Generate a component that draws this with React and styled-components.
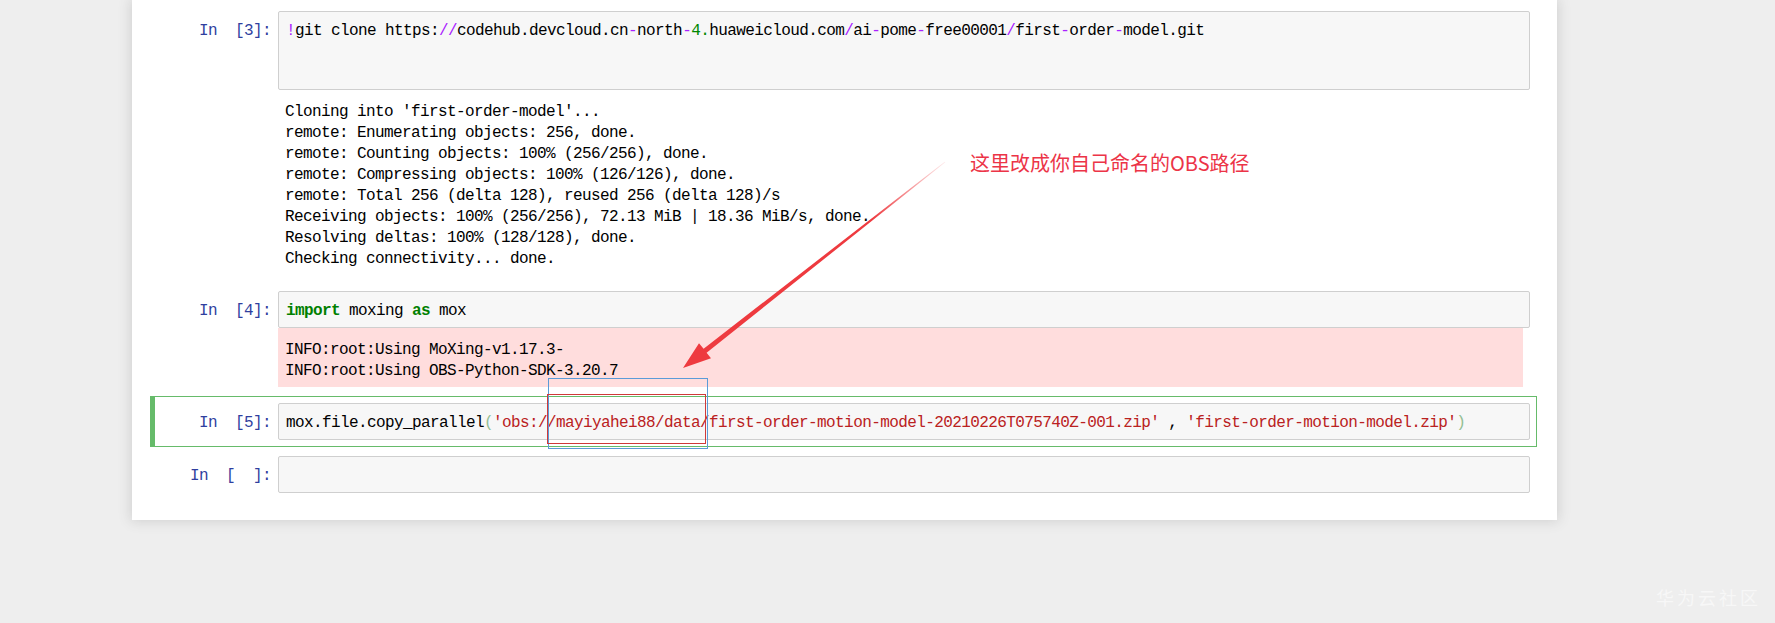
import React from "react";
import styled, { createGlobalStyle } from "styled-components";

const GlobalStyle = createGlobalStyle`
  html, body {
    margin: 0;
    padding: 0;
    background: #eeeeee;
  }
  #root {
    height: 623px;
    overflow: hidden;
  }
`;

function App() {
  return (
    <Page>
      <GlobalStyle />
      <Notebook>
        <Cell>
          <Prompt>In  [3]:</Prompt>
          <Input $lines={3}>
            <Op>!</Op>git clone https:<Op>//</Op>codehub.devcloud.cn<Op>-</Op>north
            <Op>-</Op>
            <Num>4.</Num>huaweicloud.com<Op>/</Op>ai<Op>-</Op>pome<Op>-</Op>free00001
            <Op>/</Op>first<Op>-</Op>order<Op>-</Op>model.git
          </Input>
          <Output>
            {`Cloning into 'first-order-model'...
remote: Enumerating objects: 256, done.
remote: Counting objects: 100% (256/256), done.
remote: Compressing objects: 100% (126/126), done.
remote: Total 256 (delta 128), reused 256 (delta 128)/s
Receiving objects: 100% (256/256), 72.13 MiB | 18.36 MiB/s, done.
Resolving deltas: 100% (128/128), done.
Checking connectivity... done.`}
          </Output>
        </Cell>

        <Cell>
          <Prompt>In  [4]:</Prompt>
          <Input $lines={1}>
            <Kw>import</Kw> moxing <Kw>as</Kw> mox
          </Input>
          <Output $err>
            {`INFO:root:Using MoXing-v1.17.3-
INFO:root:Using OBS-Python-SDK-3.20.7`}
          </Output>
        </Cell>

        <Cell $selected>
          <Prompt>In  [5]:</Prompt>
          <Input $lines={1}>
            mox.file.copy_parallel<Bracket>(</Bracket>
            <Str>'obs://mayiyahei88/data/first-order-motion-model-20210226T075740Z-001.zip'</Str>
            {" , "}
            <Str>'first-order-motion-model.zip'</Str>
            <Bracket>)</Bracket>
          </Input>
        </Cell>

        <Cell>
          <Prompt>In  [  ]:</Prompt>
          <Input $lines={1} />
        </Cell>
      </Notebook>

      <Note>这里改成你自己命名的OBS路径</Note>
      <Frame $color="#5b9bd8" $x={548} $y={378} $w={160} $h={71} />
      <Frame $color="#cf3a3a" $x={547} $y={394} $w={159} $h={50} />

      <ArrowLayer width="1775" height="623" viewBox="0 0 1775 623">
        <defs>
          <linearGradient
            id="shaft"
            gradientUnits="userSpaceOnUse"
            x1="945"
            y1="162"
            x2="683"
            y2="368"
          >
            <stop offset="0" stopColor="#ee3a3f" stopOpacity="0.1" />
            <stop offset="0.28" stopColor="#ee3a3f" stopOpacity="1" />
            <stop offset="1" stopColor="#ee3a3f" stopOpacity="1" />
          </linearGradient>
        </defs>
        <polygon
          fill="url(#shaft)"
          points="945.3,162.3 706.6,352.8 711,358.3 683,368 699,343.2 703.6,348.7 944.7,161.7"
        />
      </ArrowLayer>

      <Watermark>华为云社区</Watermark>
    </Page>
  );
}

export default App;

const Page = styled.div`
  position: relative;
  width: 1775px;
  height: 623px;
  overflow: hidden;
  background: #eeeeee;
  font-family: "Liberation Mono", "DejaVu Sans Mono", monospace;
  font-size: 16px;
  letter-spacing: -0.6px;
  color: #000;
`;

const Notebook = styled.div`
  margin-left: 132px;
  width: 1425px;
  box-sizing: border-box;
  padding: 4px 20px 20px 18px;
  background: #ffffff;
  box-shadow: 0 0 12px 1px rgba(87, 87, 87, 0.2);
  display: flex;
  flex-direction: column;
  gap: 2px;
`;

const Cell = styled.div`
  position: relative;
  display: grid;
  grid-template-columns: 121px 1fr;
  padding: 6px;
  border: 1px solid ${(p) => (p.$selected ? "#66bb6a" : "transparent")};

  &::before {
    content: "";
    display: ${(p) => (p.$selected ? "block" : "none")};
    position: absolute;
    left: -1px;
    top: -1px;
    bottom: -1px;
    width: 5px;
    background: #66bb6a;
  }
`;

const Prompt = styled.div`
  padding: 10px 7px 0 0;
  text-align: right;
  white-space: pre;
  line-height: 21px;
  color: #303f9f;
`;

const Input = styled.div`
  box-sizing: content-box;
  min-height: ${(p) => p.$lines * 21}px;
  padding: 9px 7px 5px;
  background: #f7f7f7;
  border: 1px solid #cfcfcf;
  border-radius: 2px;
  line-height: 21px;
  white-space: pre;
`;

const Output = styled.div`
  grid-column: 2;
  margin-right: ${(p) => (p.$err ? "7px" : "0")};
  padding: 12px 7px 5px;
  background: ${(p) => (p.$err ? "#ffdddd" : "transparent")};
  line-height: 21px;
  white-space: pre;
`;

const Op = styled.span`
  color: #aa22ff;
`;

const Num = styled.span`
  color: #008800;
`;

const Kw = styled.span`
  color: #008000;
  font-weight: bold;
`;

const Str = styled.span`
  color: #ba2121;
`;

const Bracket = styled.span`
  color: #93bf93;
`;

const Note = styled.div`
  position: absolute;
  left: 970px;
  top: 150px;
  font-family: "Noto Sans CJK SC", "Noto Sans", sans-serif;
  font-size: 20px;
  line-height: 26px;
  letter-spacing: 0;
  color: #ec3447;
  white-space: nowrap;
`;

const Frame = styled.div`
  position: absolute;
  left: ${(p) => p.$x}px;
  top: ${(p) => p.$y}px;
  width: ${(p) => p.$w}px;
  height: ${(p) => p.$h}px;
  box-sizing: border-box;
  border: 1px solid ${(p) => p.$color};
  pointer-events: none;
`;

const ArrowLayer = styled.svg`
  position: absolute;
  left: 0;
  top: 0;
  pointer-events: none;
`;

const Watermark = styled.div`
  position: absolute;
  left: 1656px;
  top: 585px;
  font-family: "Noto Sans CJK SC", sans-serif;
  font-size: 18px;
  line-height: 24px;
  letter-spacing: 3px;
  color: rgba(255, 255, 255, 0.55);
`;
